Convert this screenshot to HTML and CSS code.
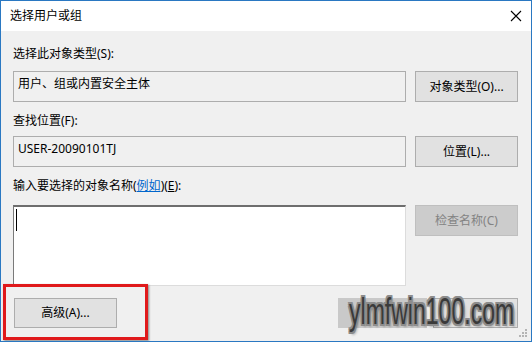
FILE: index.html
```html
<!DOCTYPE html>
<html lang="zh-CN">
<head>
  <meta charset="UTF-8">
  <title>选择用户或组</title>
  <link rel="stylesheet" href="styles.css">
</head>
<body>
  <div class="window">
    <div class="titlebar">
      <span class="title">选择用户或组</span>
      <svg class="close" width="12" height="12" viewBox="0 0 12 12">
        <path d="M1 1 L11 11 M11 1 L1 11" stroke="#000" stroke-width="1.1" fill="none"/>
      </svg>
    </div>

    <div class="content">
      <div class="label">选择此对象类型(S):</div>
      <div class="row">
        <div class="field">用户、组或内置安全主体</div>
        <div class="btn">对象类型(O)...</div>
      </div>

      <div class="label label-gap">查找位置(F):</div>
      <div class="row">
        <div class="field">USER-20090101TJ</div>
        <div class="btn">位置(L)...</div>
      </div>

      <div class="label label-gap">输入要选择的对象名称(<a class="link" href="#">例如</a>)(<u>E</u>):</div>
      <div class="row row-input">
        <div class="textarea"><span class="caret"></span></div>
        <div class="btn btn-disabled">检查名称(C)</div>
      </div>

      <div class="footer">
        <div class="btn btn-advanced">高级(A)...</div>
        <div class="footer-right">
          <div class="btn btn-ok"></div>
          <div class="btn btn-cancel"></div>
        </div>
      </div>
    </div>

    <!-- overlays -->
    <div class="highlight"></div>
    <div class="watermark">ylmfwin100.com</div>
    <svg class="grip" width="9" height="9" viewBox="0 0 9 9">
      <rect x="6" y="0" width="2" height="2" fill="#b4b4b4"/>
      <rect x="3" y="3" width="2" height="2" fill="#b4b4b4"/>
      <rect x="6" y="3" width="2" height="2" fill="#b4b4b4"/>
      <rect x="0" y="6" width="2" height="2" fill="#b4b4b4"/>
      <rect x="3" y="6" width="2" height="2" fill="#b4b4b4"/>
      <rect x="6" y="6" width="2" height="2" fill="#b4b4b4"/>
    </svg>
  </div>
</body>
</html>
```

FILE: styles.css
```css
body {
  margin: 0;
  font-family: "Noto Sans", "Noto Sans CJK SC", sans-serif;
  font-size: 12px;
  color: #000;
}

.window {
  position: relative;
  width: 532px;
  height: 342px;
  box-sizing: border-box;
  border: 1px solid #2a78c2;
  background: #f0f0f0;
  overflow: hidden;
}

.titlebar {
  height: 30px;
  background: #fff;
  display: flex;
  align-items: center;
  justify-content: space-between;
  padding: 0 9px 0 9px;
}

.title {
  line-height: 16px;
}

.close {
  display: block;
}

.content {
  padding: 15px 13px 0 12px;
}

.label {
  line-height: 16px;
  height: 16px;
}

.label-gap {
  margin-top: 11px;
}

.link {
  color: #0066cc;
  text-decoration: underline;
}

.row {
  display: flex;
  align-items: flex-start;
  gap: 9px;
  margin-top: 9px;
}

.label-gap + .row {
  margin-top: 7px;
}

.field {
  width: 393px;
  height: 31px;
  box-sizing: border-box;
  border: 1px solid #adadad;
  padding: 4px 4px;
  line-height: 16px;
  white-space: nowrap;
}

.btn {
  width: 103px;
  height: 31px;
  box-sizing: border-box;
  border: 1px solid #adadad;
  background: #e1e1e1;
  display: flex;
  align-items: center;
  justify-content: center;
  line-height: 16px;
}

.btn-disabled {
  background: #cccccc;
  border-color: #bfbfbf;
  color: #838383;
}

.row-input {
  margin-top: 11px;
}

.label-gap + .row-input {
  margin-top: 11px;
}

.textarea {
  position: relative;
  width: 393px;
  height: 81px;
  box-sizing: border-box;
  background: #fff;
  border-top: 2px solid #6e6e6e;
  border-left: 1px solid #7a7a7a;
  border-right: 1px solid #dcdcdc;
  border-bottom: 1px solid #dcdcdc;
}

.caret {
  position: absolute;
  left: 2px;
  top: 2px;
  width: 1px;
  height: 22px;
  background: #000;
}

.footer {
  display: flex;
  justify-content: space-between;
  align-items: flex-start;
  margin-top: 12px;
}

.footer .btn {
  height: 30px;
}

.btn-advanced {
  margin-left: 1px;
}

.footer-right {
  display: flex;
  gap: 6px;
}

.btn-ok {
  width: 89px;
  background: #c9c9c9;
  border-color: #c9c9c9;
}

.btn-cancel {
  width: 85px;
}

.highlight {
  position: absolute;
  left: 2px;
  top: 283px;
  width: 145px;
  height: 56px;
  box-sizing: border-box;
  border: 3px solid #e0191b;
  box-shadow: 1px 1px 2px rgba(0, 0, 0, 0.45);
}

.watermark {
  position: absolute;
  left: 348px;
  top: 293px;
  font-family: "Liberation Sans", Arial, sans-serif;
  font-size: 36px;
  line-height: 36px;
  color: #3a3a3a;
  white-space: nowrap;
  transform: scaleX(0.64);
  transform-origin: left top;
  text-shadow:
    2px 0 #8c8c8c, -2px 0 #8c8c8c, 0 2px #8c8c8c, 0 -2px #8c8c8c,
    2px 2px #8c8c8c, -2px -2px #8c8c8c, 2px -2px #8c8c8c, -2px 2px #8c8c8c,
    3px 3px 3px rgba(0, 0, 0, 0.25);
}

.grip {
  position: absolute;
  right: 3px;
  bottom: 3px;
}
```
